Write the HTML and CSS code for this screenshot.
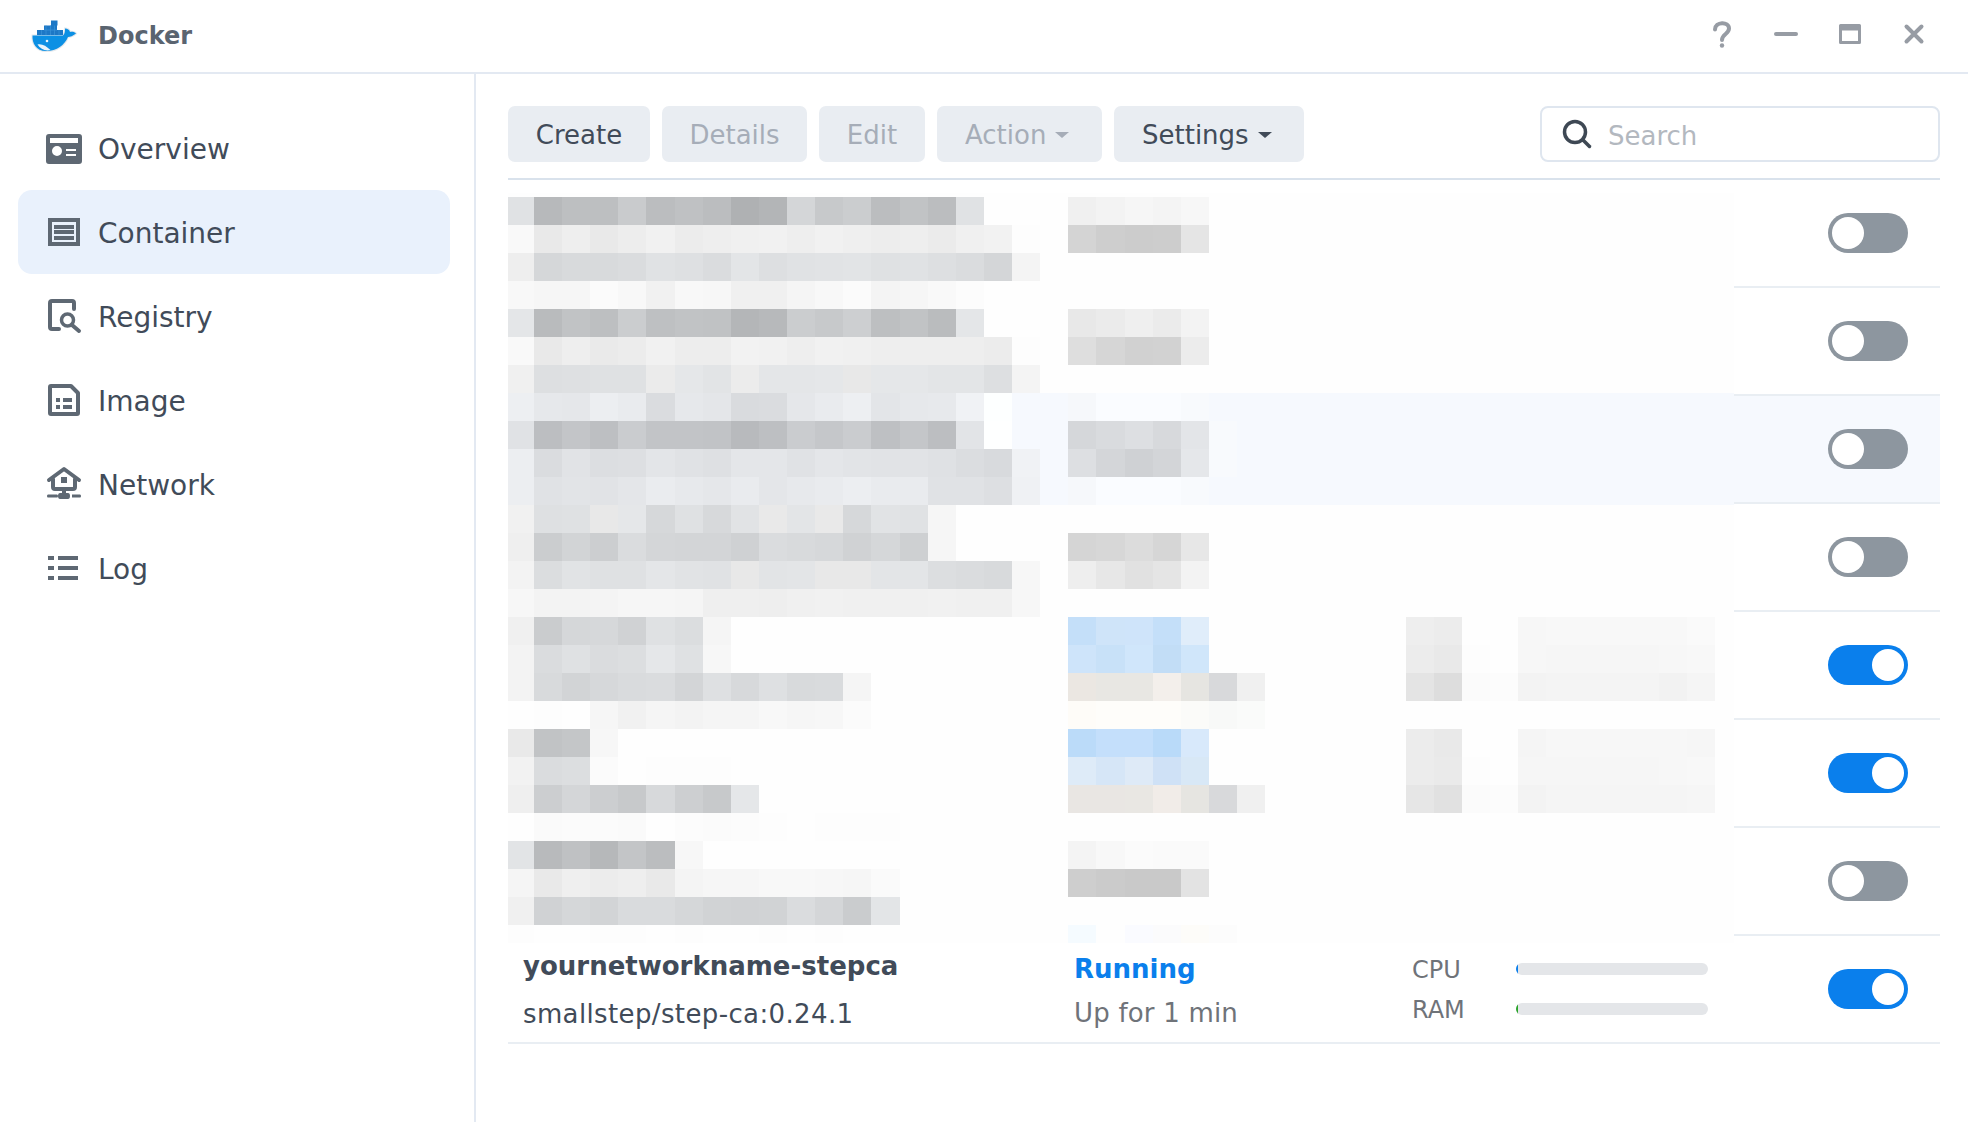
FILE: index.html
```html
<!DOCTYPE html>
<html lang="en">
<head>
<meta charset="utf-8">
<title>Docker</title>
<link rel="stylesheet" href="styles.css">
</head>
<body>
<div class="window">
  <header class="titlebar">
    <svg class="logo" viewBox="30 16 50 38" aria-hidden="true">
      <path class="logo-halo" d="M32.5 35.5H63C65 33.5 65 31 65 28.500C67.500 28.500 69.500 30 70 32C72 31.500 75 32 76 33.500C73 36 70 37 68 37C64.500 45 57 51 46 51C36 51 32 43 32.500 35.500Z"/>
      <path class="logo-body" d="M32.5 35.5H63C65 33.5 65 31 65 28.500C67.500 28.500 69.500 30 70 32C72 31.500 75 32 76 33.500C73 36 70 37 68 37C64.500 45 57 51 46 51C36 51 32 43 32.500 35.500Z"/>
      <path class="logo-belly" d="M37.500 44.500C42 43.500 46 46 50.500 50C45 51.500 40.500 49 37.500 44.500Z"/>
      <circle class="logo-belly" cx="47" cy="41" r="1.300"/>
      <path class="logo-box" d="M37 30h26v5H37zM44 25.500h13V30H44zM51 20.500h6.500v5H51z"/>
      <path class="logo-grid" d="M41.500 30v5M46 25.500V35M50.500 25.500V35M54.500 25.500V35M59 30v5M44 30h13"/>
    </svg>
    <span class="app-title">Docker</span>
    <div class="window-controls">
      <span class="control"><svg viewBox="0 0 24 28" aria-hidden="true"><path class="ctl-line" d="M5 9.500C5 1.500 19 1 19 8.500C19 14 12 14 12 20"/><circle class="ctl-fill" cx="12" cy="25.500" r="2.200"/></svg></span>
      <span class="control"><svg viewBox="0 0 24 28" aria-hidden="true"><path class="ctl-line" d="M2 14H22"/></svg></span>
      <span class="control"><svg viewBox="0 0 24 28" aria-hidden="true"><path class="ctl-fill" d="M1 5.500Q1 4 2.500 4h19Q23 4 23 5.500v17Q23 24 21.500 24h-19Q1 24 1 22.500zM4 10.500V21H20V10.500z"/></svg></span>
      <span class="control"><svg viewBox="0 0 24 28" aria-hidden="true"><path class="ctl-line" d="M4.500 6.500L19.500 21.500M19.500 6.500L4.500 21.500"/></svg></span>
    </div>
  </header>

  <div class="body">
    <nav class="sidebar">
      <a class="nav-item">
        <svg class="nav-icon" viewBox="0 0 36 36" aria-hidden="true"><path class="ico-fill" fill-rule="evenodd" d="M3 3H33Q36 3 36 6V30Q36 33 33 33H3Q0 33 0 30V6Q0 3 3 3ZM4 7V12H32V7ZM16 20A5 5 0 1 0 6 20 5 5 0 1 0 16 20ZM20 18V20H30V18ZM20 23V25H30V23Z" transform="translate(0 1)"/></svg>
        <span>Overview</span>
      </a>
      <a class="nav-item active">
        <svg class="nav-icon" viewBox="0 0 36 36" aria-hidden="true"><path class="ico-fill" d="M2 4H34V8H2ZM2 28H34V32H2ZM2 8H6V28H2ZM30 8H34V28H30ZM8 11H28V15H8ZM8 16H28V20H8ZM8 22H28V26H8Z"/></svg>
        <span>Container</span>
      </a>
      <a class="nav-item">
        <svg class="nav-icon" viewBox="0 0 36 36" aria-hidden="true"><path class="ico-line" d="M28 11V5Q28 3 26 3H6Q4 3 4 5V29Q4 31 6 31H13"/><circle class="ico-thin" cx="21.500" cy="22" r="6"/><path class="ico-line" d="M26 27L33 33"/></svg>
        <span>Registry</span>
      </a>
      <a class="nav-item">
        <svg class="nav-icon" viewBox="0 0 36 36" aria-hidden="true"><path class="ico-line" d="M4 5Q4 4 5 4H25L32 11V31Q32 32 31 32H5Q4 32 4 31Z"/><path class="ico-fill" d="M10 16H14V20H10ZM10 23H14V27H10ZM17 16H26V20H17ZM17 23H26V27H17Z"/></svg>
        <span>Image</span>
      </a>
      <a class="nav-item">
        <svg class="nav-icon" viewBox="0 0 36 36" aria-hidden="true"><path class="ico-line" d="M3 14L18 3L33 14M7 13V21Q7 23 9 23H27Q29 23 29 21V13"/><path class="ico-fill" d="M15 11H21V17H15ZM16 23H20V29H16Z"/><path class="ico-fill" d="M2 28.500H11Q12 28.500 12 30Q12 31.500 11 31.500H2Q1 31.500 1 30Q1 28.500 2 28.500ZM26 28.500H34Q35 28.500 35 30Q35 31.500 34 31.500H26ZM14 27H22Q24 27 24 30Q24 33 22 33H14Q12 33 12 30Q12 27 14 27Z"/></svg>
        <span>Network</span>
      </a>
      <a class="nav-item">
        <svg class="nav-icon" viewBox="0 0 36 36" aria-hidden="true"><path class="ico-fill" d="M2 6H8V10H2ZM2 16H8V20H2ZM2 26H8V30H2ZM12 6H32V10H12ZM12 16H32V20H12ZM12 26H32V30H12Z"/></svg>
        <span>Log</span>
      </a>
    </nav>

    <main class="content">
      <div class="toolbar">
        <button class="btn btn-create">Create</button>
        <button class="btn btn-details disabled">Details</button>
        <button class="btn btn-edit disabled">Edit</button>
        <button class="btn btn-action disabled caret">Action</button>
        <button class="btn btn-settings caret">Settings</button>
        <label class="search">
          <svg class="search-icon" viewBox="0 0 30 30" aria-hidden="true"><circle cx="13" cy="13" r="10.500"/><path d="M21 21L27.500 27.500"/></svg>
          <span class="search-text">Search</span>
        </label>
      </div>

      <div class="list">
        <div class="row"><span class="toggle"></span></div>
        <div class="row"><span class="toggle"></span></div>
        <div class="row hover"><span class="toggle"></span></div>
        <div class="row"><span class="toggle"></span></div>
        <div class="row"><span class="toggle on"></span></div>
        <div class="row"><span class="toggle on"></span></div>
        <div class="row"><span class="toggle"></span></div>
        <div class="row">
          <div class="col-name">
            <div class="name">yournetworkname-stepca</div>
            <div class="image">smallstep/step-ca:0.24.1</div>
          </div>
          <div class="col-status">
            <div class="running">Running</div>
            <div class="uptime">Up for 1 min</div>
          </div>
          <div class="col-usage">
            <div class="usage"><span class="usage-label">CPU</span><span class="bar"><i class="fill cpu"></i></span></div>
            <div class="usage"><span class="usage-label">RAM</span><span class="bar"><i class="fill ram"></i></span></div>
          </div>
          <span class="toggle on"></span>
        </div>
        <svg id="mosaic" class="mosaic" viewBox="508 193 1226 750" shape-rendering="crispEdges" aria-hidden="true"></svg>
      </div>
    </main>
  </div>
</div>
<script src="mosaic.js"></script>
</body>
</html>
```
FILE: styles.css
```css
* { box-sizing: border-box; }
html, body { margin: 0; height: 100%; background: #fff; }
body { font-family: "DejaVu Sans", "Liberation Sans", sans-serif; color: #414b59; overflow: hidden; }
.window { display: flex; flex-direction: column; height: 1122px; }

.titlebar { display: flex; align-items: center; height: 74px; flex: none; border-bottom: 2px solid #e3e9f2; padding: 0 22px 0 30px; }
.logo { width: 50px; height: 38px; flex: none; margin-top: -2px; }
.logo-halo { fill: #d5dbe0; stroke: #e4e8ec; stroke-width: 2; }
.logo-body { fill: #0c90e4; }
.logo-belly { fill: #e9f4fb; }
.logo-box { fill: #1d78c6; }
.logo-grid { fill: none; stroke: #3a93d8; stroke-width: .7; }
.app-title { margin-left: 18px; font-size: 24px; font-weight: 700; color: #5a6470; line-height: 1; margin-top: -1px; }
.window-controls { display: flex; margin-left: auto; }
.control { width: 64px; display: flex; justify-content: center; }
.control svg { width: 24px; height: 28px; display: block; margin-top: -4px; }
.ctl-line { fill: none; stroke: #979ca4; stroke-width: 4; stroke-linecap: round; }
.ctl-fill { fill: #979ca4; fill-rule: evenodd; }

.body { display: flex; flex: 1; min-height: 0; }
.sidebar { width: 476px; flex: none; border-right: 2px solid #e3e9f2; padding: 32px 24px 0 18px; }
.nav-item { display: flex; align-items: center; height: 84px; padding-left: 28px; border-radius: 14px; font-size: 28px; color: #414b59; }
.nav-item span { padding-top: 2px; }
.nav-item.active { background: #e9f1fc; }
.nav-icon { width: 36px; height: 36px; flex: none; margin-right: 16px; }
.ico-fill { fill: #5e6873; }
.ico-line { fill: none; stroke: #5e6873; stroke-width: 4; stroke-linecap: round; stroke-linejoin: round; }
.ico-thin { fill: none; stroke: #5e6873; stroke-width: 3.500; }

.content { flex: 1; padding: 32px 28px 0 32px; min-width: 0; }
.toolbar { display: flex; height: 74px; gap: 12px; padding-bottom: 16px; border-bottom: 2px solid #d9e2ec; }
.btn { height: 56px; padding: 2px 0 0; border: 0; border-radius: 7px; background: #e9edf2; color: #414b59; font: 26px "DejaVu Sans", "Liberation Sans", sans-serif; display: flex; align-items: center; justify-content: center; flex: none; }
.btn-create { width: 142px; }
.btn-details { width: 145px; }
.btn-edit { width: 106px; }
.btn-action { width: 165px; }
.btn-settings { width: 190px; }
.btn.disabled { color: #a6adb8; }
.btn.caret { justify-content: flex-start; padding-left: 28px; }
.btn.caret::after { content: ""; margin-left: 9px; border-left: 7px solid transparent; border-right: 7px solid transparent; border-top: 6px solid currentColor; }
.search { margin-left: auto; width: 400px; height: 56px; border: 2px solid #dfe6ef; border-radius: 8px; display: flex; align-items: center; padding-left: 20px; }
.search-icon { width: 30px; height: 30px; flex: none; fill: none; stroke: #3e4854; stroke-width: 3.500; stroke-linecap: round; }
.search-text { margin-left: 16px; font-size: 26px; color: #b3b8bf; padding-top: 4px; }

.list { position: relative; }
.row { display: flex; align-items: center; height: 108px; border-bottom: 2px solid #e9eef3; padding-left: 15px; }
.row.hover { background: #f6f9fe; }
.toggle { position: relative; display: block; width: 80px; height: 40px; margin-left: auto; margin-right: 32px; border-radius: 20px; background: #8d969f; flex: none; }
.toggle::after { content: ""; position: absolute; top: 4px; left: 4px; width: 32px; height: 32px; border-radius: 50%; background: #fff; }
.toggle.on { background: #0a7fec; }
.toggle.on::after { left: 44px; }
.mosaic { position: absolute; left: 0; top: 13px; width: 1226px; height: 750px; display: block; }

.col-name { width: 551px; flex: none; padding-top: 12px; }
.name { font-size: 26px; font-weight: 700; color: #414b59; line-height: 30px; margin-top: -10px; }
.image { font-size: 26px; letter-spacing: .37px; line-height: 30px; margin-top: 18px; color: #414b59; }
.col-status { width: 338px; flex: none; padding-top: 5px; }
.running { font-size: 26px; font-weight: 700; color: #0a7fec; line-height: 30px; margin-top: -2px; }
.uptime { font-size: 26px; letter-spacing: .2px; line-height: 30px; margin-top: 14px; color: #6f7379; }
.col-usage { width: 296px; flex: none; display: flex; flex-direction: column; gap: 12px; }
.usage { display: flex; align-items: center; height: 28px; }
.usage-label { width: 104px; flex: none; font-size: 24px; color: #6f7379; padding-top: 1px; }
.bar { display: block; width: 192px; height: 12px; border-radius: 6px; background: #e4e6e9; overflow: hidden; }
.fill { display: block; width: 2px; height: 100%; }
.fill.cpu { background: #0a7fec; }
.fill.ram { background: #2aa52a; }
```
FILE: mosaic.js
```js
// The redacted part of the table: a pixelated block, one [row, firstColumn, cells] entry per run.
var T = 'tint';
var data = [
  [0,0,'e2 b9 bf bf cb bd c1 bd b1 b5 d6 c9 cd bd c3 bd e2'],
  [1,0,'f9 e9 ee e9 ed f1 ec ee f0 f1 ee f1 ef ed ee eb f0 f2 fd'],
  [2,0,'ee d7 da da dc e2 e0 dc e5 df e2 e3 e4 e1 e2 df dc d6 f4'],
  [3,0,'f8 f6 f6 fb f8 f1 f8 f7 f0 f0 f5 f8 fb f4 f6 f9 fc'],
  [4,0,'e6 bb c3 bf cd c0 c3 c2 b6 b9 cd c9 cf bf c3 bc e6'],
  [5,0,'f9 e9 ee ea ec f1 ed ed f2 f1 ee f1 f0 ee ee ee ee ec fd'],
  [6,0,'f0 df e0 e1 e1 eb e7 e4 ec e6 e6 e7 e8 e7 e7 e5 e5 df f4'],
  [7,0,'ee e7 e6 ed ea db e7 e5 da db e6 ea ee e4 e7 e8 f1 fe',T],
  [8,0,'e1 bd c4 be cb c3 c3 c2 b9 be cb c6 cb bf c5 bd e3 ff',T],
  [9,0,'ed db e2 dd de e4 e1 df e5 e5 e1 e5 e3 e2 e2 e0 dc d9 f1',T],
  [10,0,'ed e1 e3 e2 e5 eb e8 e6 ea e5 e8 ea ed ea ea e1 e1 de f0',T],
  [11,0,'f1 e0 e1 e8 e7 d8 e1 d9 e3 e9 e5 e9 d8 e3 e2 f6'],
  [12,0,'ef cd d4 ce dc d6 d5 d5 d1 dc da d8 d2 d7 d0 f6'],
  [13,0,'f3 dd e3 e1 e1 e6 e3 e2 e8 e4 e5 e8 e8 e5 e5 de dc da f7'],
  [14,0,'f7 f3 f3 f4 f6 f6 f5 ef ef ee f0 f1 f0 f0 f0 f1 f0 f0 f7'],
  [15,0,'f0 cc d7 d8 d2 e1 dd f5'],
  [16,0,'f3 dc e1 dc de e7 e1 f7'],
  [17,0,'f3 da d4 d8 db dc d5 e0 d9 e0 da db f5'],
  [18,0,'fe fd fe f6 f1 f5 f3 f5 f5 f8 f6 f7 fb'],
  [19,0,'e9 c3 c6 f7'],
  [20,0,'f2 dc de fb fe fd fd fd fe'],
  [21,0,'ef ce d6 ce c9 d9 cf c9 e7'],
  [22,0,'fe fa fb fb fa fe fc fb fc fd fe fd fd fd fe'],
  [23,0,'e4 ba c1 b8 c5 bd f7'],
  [24,0,'f5 e9 ef ec ee e9 f4 f6 f6 f8 f8 f7 f6 fa'],
  [25,0,'f0 d2 d7 d4 db db d7 d3 d2 d3 dc d6 cc e5'],
  [26,0,'fd fe fe fd fd fe fd fe fe fd fe fd fe fe'],

  [0,20,'f0 f3 f6 f4 f7'],
  [1,20,'d4 ce cc cd e5'],
  [4,20,'e8 eb ef eb f3'],
  [5,20,'de d6 d1 d2 ec'],
  [7,20,'f7 fb fb fb f9',T],
  [8,20,'d6 da de d8 e4 f9',T],
  [9,20,'de d5 d0 d4 e6 f9',T],
  [10,20,'f7 fb fb fb f9',T],
  [12,20,'d5 d7 dc d6 e7'],
  [13,20,'ee e7 e1 e5 f3'],
  [15,20,'c4dff9 cfe4f9 cfe4fa c4dff9 e0edfa'],
  [16,20,'cee4fa c8e1f8 d0e6fb c2ddf6 d0e6fa'],
  [17,20,'ebe7e2 e8e7e3 e8e7e3 f3efeb e6e5e1 d8d9db f0f0f0'],
  [18,20,'fefcf8 fefdfa fefdfa fefdfa fbfbf9 f8f9f8 fafbfa'],
  [19,20,'bbdbf9 c4dffb c4dffb b9daf9 d8e9fb'],
  [20,20,'deebf8 d6e6f7 deeaf7 cfe1f6 d8e8f6'],
  [21,20,'e9e6e3 e9e6e3 e9e7e3 f1ece8 e6e5e1 d8d9db f0f0f0'],
  [23,20,'f4 f8 fb fa fa'],
  [24,20,'ce cb c9 c9 e3'],
  [26,20,'f5fbff fe fafbff fbfbfc fdfcf9 fc'],

  [15,32,'ee ec'],
  [16,32,'ec e9 fd fe'],
  [17,32,'e4 dd fb fc'],
  [19,32,'ec e9'],
  [20,32,'ec ea fd fe'],
  [21,32,'e6 e1 fb fc'],
  [15,36,'f7 f8 f8 f8 f8 f8 fa'],
  [16,36,'f7 f6 f6 f6 f6 f7 f8'],
  [17,36,'f3 f4 f4 f4 f4 f2 f5'],
  [19,36,'f5 f7 f7 f7 f7 f7 f6'],
  [20,36,'f6 f6 f6 f6 f6 f7 f8'],
  [21,36,'f3 f5 f5 f5 f5 f5 f6']
];
var NS = 'http://www.w3.org/2000/svg';
var svg = document.getElementById('mosaic');
function rect(x, y, w, h, fill) {
  var r = document.createElementNS(NS, 'rect');
  r.setAttribute('x', x); r.setAttribute('y', y);
  r.setAttribute('width', w); r.setAttribute('height', h);
  r.setAttribute('fill', fill);
  svg.appendChild(r);
}
function colX(k) { return k === 0 ? 508 : Math.round(534 + (k - 1) * 28.12); }
function colour(c, tint, cool) {
  if (c.length === 6) return '#' + c;
  var v = parseInt(c, 16);
  if (tint) return 'rgb(' + (v - 1) + ',' + Math.min(v + 1, 255) + ',' + Math.min(v + 4, 255) + ')';
  if (cool && v < 0xe8) return 'rgb(' + (v - 2) + ',' + v + ',' + (v + 2) + ')';
  return 'rgb(' + v + ',' + v + ',' + v + ')';
}
rect(508, 193, 1226, 750, '#fefefe');
rect(colX(18), 393, 1734 - colX(18), 112, '#f6f9fe');
data.forEach(function (d) {
  d[2].split(' ').forEach(function (c, i) {
    var x = colX(d[1] + i);
    rect(x, 197 + 28 * d[0], colX(d[1] + i + 1) - x, d[0] === 26 ? 18 : 28, colour(c, d[3], d[1] < 20));
  });
});
```
